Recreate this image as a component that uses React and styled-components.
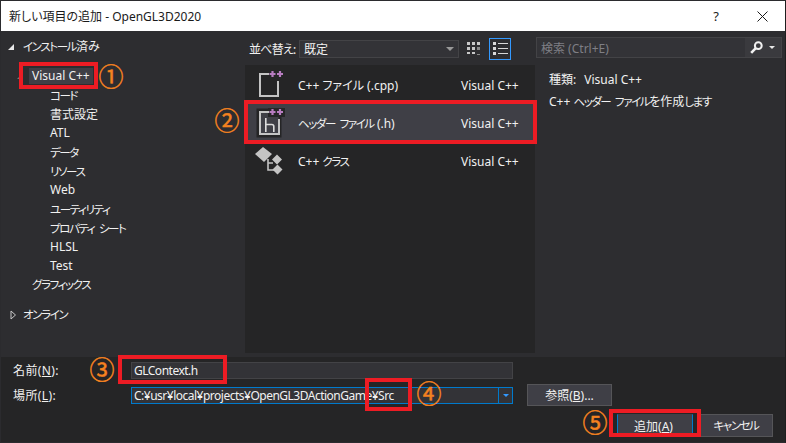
import React from 'react';
import styled, { createGlobalStyle } from 'styled-components';

const FONT = '"Noto Sans", "Noto Sans CJK JP", sans-serif';

const Global = createGlobalStyle`
  html, body { margin: 0; padding: 0; background: #1e1e1e; }
  * { box-sizing: border-box; }
`;

const Dialog = styled.div`
  position: relative;
  width: 786px;
  height: 443px;
  overflow: hidden;
  display: flex;
  flex-direction: column;
  background: #2d2d30;
  border: 1px solid #2b2b2e;
  border-right-color: #1e1e1e;
  font-family: ${FONT};
  font-size: 12px;
  font-feature-settings: "palt";
  color: #f1f1f1;
`;

// the dialog's UI font has narrow kana, so kana runs get tightened
const Kana = styled.span`
  font-size: 11.5px;
  letter-spacing: -1.4px;
  word-spacing: 3px;
`;

const TitleBar = styled.div`
  height: 30px;
  flex: none;
  display: flex;
  align-items: center;
  background: #fff;
  color: #1a1a1a;
  padding-left: 8px;
  font-size: 12px;
`;

const TitleText = styled.div`
  flex: 1;
  padding-bottom: 1px;
`;

const Help = styled.div`
  width: 46px;
  text-align: center;
  font-size: 13px;
`;

const CloseBtn = styled.div`
  width: 46px;
  display: flex;
  justify-content: center;
`;

const Main = styled.div`
  height: 326px;
  flex: none;
  display: flex;
`;

const Tree = styled.div`
  width: 243px;
  flex: none;
  padding-top: 6px;
`;

const TreeRow = styled.div`
  height: 19px;
  display: flex;
  align-items: center;
  padding-left: ${(p) => p.$indent}px;
  margin-top: ${(p) => p.$gap || 0}px;
  white-space: nowrap;
`;

const TreeLabel = styled.span`
  padding: 0 3px;
  line-height: 16px;
  background: ${(p) => (p.$selected ? '#3f3f46' : 'transparent')};
`;

const Arrow = styled.span`
  width: 0;
  height: 0;
  margin-right: 6px;
  flex: none;
  border-bottom: 6px solid ${(p) => (p.$dim ? '#777' : '#e8e8e8')};
  border-left: 6px solid transparent;
`;

const ClosedArrowBox = styled.span`
  width: 7px;
  height: 10px;
  margin-right: 3px;
  flex: none;
  display: flex;
`;

const Center = styled.div`
  width: 291px;
  flex: none;
  display: flex;
  flex-direction: column;
  padding-left: 1px;
`;

const Toolbar = styled.div`
  height: 34px;
  flex: none;
  display: flex;
  align-items: center;
  padding-left: 4px;
  padding-top: 1px;
`;

const SortLabel = styled.span`
  width: 50px;
  flex: none;
  white-space: nowrap;
  letter-spacing: -0.8px;
`;

const SortSelect = styled.div`
  width: 160px;
  height: 18px;
  display: flex;
  align-items: center;
  justify-content: space-between;
  padding: 0 4px;
  background: #333337;
  border: 1px solid #434346;
`;

const Caret = styled.span`
  width: 0;
  height: 0;
  border-top: ${(p) => p.$s || 4}px solid ${(p) => p.$color || '#999'};
  border-left: ${(p) => p.$s || 4}px solid transparent;
  border-right: ${(p) => p.$s || 4}px solid transparent;
`;

const ViewBtn = styled.div`
  width: 22px;
  height: 22px;
  margin-left: ${(p) => p.$ml}px;
  display: flex;
  align-items: center;
  justify-content: center;
  border: 1px solid ${(p) => (p.$active ? '#3399ff' : 'transparent')};
`;

const List = styled.div`
  height: 288px;
  background: #252526;
  padding-top: 1px;
`;

const Item = styled.div`
  height: 38px;
  display: flex;
  align-items: center;
  background: ${(p) => (p.$selected ? '#3f3f46' : 'transparent')};
`;

const ItemIcon = styled.div`
  width: 53px;
  flex: none;
  display: flex;
  justify-content: center;
  padding-right: 3px;
`;

const ItemName = styled.div`
  width: 163px;
  flex: none;
`;

const Details = styled.div`
  flex: 1;
  padding: 6px 5px 0 1px;
`;

const SearchBox = styled.div`
  width: 246px;
  height: 21px;
  display: flex;
  align-items: center;
  background: #333337;
  border: 1px solid #434346;
  padding-left: 4px;
  color: #7f7f85;
`;

const SearchText = styled.span`
  flex: 1;
`;

const SearchBtn = styled.div`
  width: 36px;
  height: 19px;
  display: flex;
  align-items: center;
  justify-content: space-between;
  padding: 0 6px 0 5px;
  background: #3a3a3e;
`;

const Info = styled.div`
  padding: 11px 0 0 13px;
  line-height: 22px;
`;

const InfoKey = styled.span`
  margin-right: 8px;
`;

const Footer = styled.div`
  flex: 1;
  background: #252526;
  padding: 4px 12px 0 12px;
`;

const FormRow = styled.div`
  display: flex;
  align-items: center;
  margin-top: ${(p) => p.$mt || 0}px;
`;

const FormLabel = styled.label`
  width: 118px;
  flex: none;
  letter-spacing: 0.4px;

  u { text-underline-offset: 1px; }
`;

const TextBox = styled.div`
  width: 382px;
  height: 17px;
  flex: none;
  display: flex;
  align-items: center;
  padding-left: 2px;
  background: #333337;
  border: 1px solid ${(p) => (p.$focus ? '#007acc' : '#434346')};
  white-space: nowrap;
  letter-spacing: -0.5px;
`;

const BoxText = styled.span`
  flex: 1;
`;

const DropBtn = styled.span`
  width: 14px;
  height: 15px;
  display: flex;
  align-items: center;
  justify-content: center;
  border-left: 1px solid #007acc;
`;

const Button = styled.button`
  width: ${(p) => p.$w}px;
  height: ${(p) => p.$h}px;
  margin-left: ${(p) => p.$ml || 0}px;
  flex: none;
  padding: 0;
  font: inherit;
  font-feature-settings: "palt";
  color: #f1f1f1;
  background: #3f3f46;
  border: 1px solid #555558;
  ${(p) => p.$primary && 'border-color: #3f3f46; border-left-color: #007acc; border-right-color: #007acc; padding-right: 3px;'}

  u { text-underline-offset: 1px; }
`;

const Actions = styled.div`
  display: flex;
  justify-content: flex-end;
  margin-top: 8px;
`;

// annotation layer drawn over the dialog
const RedBox = styled.div`
  position: absolute;
  left: ${(p) => p.$x - 1}px;
  top: ${(p) => p.$y - 1}px;
  width: ${(p) => p.$w}px;
  height: ${(p) => p.$h}px;
  border: 4px solid #ed1c24;
`;

const Num = styled.div`
  position: absolute;
  left: ${(p) => p.$x - 1}px;
  top: ${(p) => p.$y - 1}px;
  width: 24px;
  height: 24px;
  display: flex;
  align-items: center;
  justify-content: center;
  font-family: "Noto Sans CJK JP", sans-serif;
  font-feature-settings: normal;
  font-size: 25px;
  line-height: 24px;
  color: #f58220;
  -webkit-text-stroke: 0.5px #f58220;
`;

const treeChildren = [
  { label: 'コード', kana: true },
  { label: '書式設定' },
  { label: 'ATL' },
  { label: 'データ', kana: true },
  { label: 'リソース', kana: true },
  { label: 'Web' },
  { label: 'ユーティリティ', kana: true },
  { label: 'プロパティ シート', kana: true },
  { label: 'HLSL' },
  { label: 'Test' },
];

const Pluses = () => (
  <path d="M14.5 4h6M17.5 1v6M22 4h6M25 1v6" stroke="#b77cc0" strokeWidth="2.2" />
);

const CppFileIcon = () => (
  <svg width="30" height="30" viewBox="0 0 30 30">
    <path d="M14 4H5V26H23V11" fill="none" stroke="#c4c4c4" strokeWidth="2" />
    <Pluses />
  </svg>
);

const HeaderIcon = () => (
  <svg width="30" height="30" viewBox="0 0 30 30">
    <path d="M3 2H25V28H3z" fill="none" stroke="#252526" strokeWidth="3" />
    <path d="M13 0h17v9H13z" fill="#252526" />
    <path d="M14 4H5V26H24V11" fill="none" stroke="#c4c4c4" strokeWidth="2" />
    <path d="M10.8 10v14M10.8 16.5h6a2 2 0 0 1 2 2V24" fill="none" stroke="#dcdcdc" strokeWidth="1.6" />
    <Pluses />
  </svg>
);

const ClassIcon = () => (
  <svg width="30" height="30" viewBox="0 0 30 30">
    <path d="M8 1l9 7-8 8-9-8z" fill="#c4c4c4" />
    <path d="M22 8.5l5 5-5 5-5-5zM22.5 18.5l5 5-5 5-5-5z" fill="#c4c4c4" />
    <path d="M13 13v11h6M13 17h5" fill="none" stroke="#c4c4c4" strokeWidth="1.6" />
  </svg>
);

const GridIcon = () => (
  <svg width="14" height="14" viewBox="0 0 14 14" fill="#c8c8c8">
    <path d="M0 0h3v3H0zM5 0h3v3H5zM10 0h3v3h-3zM0 5h3v3H0zM5 5h3v3H5zM0 10h3v2H0zM5 10h3v2H5z" />
    <path d="M10 5h3v3h-3zM10 12h3v1h-3z" fill="#8a8a8a" />
  </svg>
);

const ListIcon = () => (
  <svg width="15" height="14" viewBox="0 0 15 14" fill="#d8d8d8">
    <path d="M0 0h3v3H0zM0 5h3v3H0zM0 10h3v3H0z" />
    <path d="M5 1h10v1H5zM5 6h10v1H5zM5 11h10v1H5z" />
  </svg>
);

const SearchIcon = () => (
  <svg width="13" height="13" viewBox="0 0 13 13">
    <circle cx="8.3" cy="4.7" r="3.4" fill="none" stroke="#f1f1f1" strokeWidth="2" />
    <path d="M5.8 7.2L1.2 11.8" stroke="#f1f1f1" strokeWidth="2.6" />
  </svg>
);

const CloseIcon = () => (
  <svg width="11" height="11" viewBox="0 0 11 11">
    <path d="M.5.5l10 10M10.5.5l-10 10" stroke="#1a1a1a" strokeWidth="1" />
  </svg>
);

const ClosedArrow = () => (
  <ClosedArrowBox>
    <svg width="7" height="10" viewBox="0 0 7 10">
      <path d="M1 1l4.5 4L1 9z" fill="none" stroke="#c8c8c8" />
    </svg>
  </ClosedArrowBox>
);

const App = () => {
  return (
    <Dialog>
      <Global />
      <TitleBar>
        <TitleText>新しい項目の追加 - OpenGL3D2020</TitleText>
        <Help>?</Help>
        <CloseBtn><CloseIcon /></CloseBtn>
      </TitleBar>

      <Main>
        <Tree>
          <TreeRow $indent={7}><Arrow /><TreeLabel><Kana>インストール</Kana>済み</TreeLabel></TreeRow>
          <TreeRow $indent={16} $gap={10}><Arrow $dim /><TreeLabel $selected>Visual C++</TreeLabel></TreeRow>
          {treeChildren.map((t) => (
            <TreeRow key={t.label} $indent={49}>{t.kana ? <Kana>{t.label}</Kana> : t.label}</TreeRow>
          ))}
          <TreeRow $indent={28}><TreeLabel><Kana>グラフィックス</Kana></TreeLabel></TreeRow>
          <TreeRow $indent={9} $gap={11}><ClosedArrow /><TreeLabel><Kana>オンライン</Kana></TreeLabel></TreeRow>
        </Tree>

        <Center>
          <Toolbar>
            <SortLabel>並べ替え:</SortLabel>
            <SortSelect>既定<Caret /></SortSelect>
            <ViewBtn $ml={4}><GridIcon /></ViewBtn>
            <ViewBtn $ml={4} $active><ListIcon /></ViewBtn>
          </Toolbar>
          <List>
            <Item>
              <ItemIcon><CppFileIcon /></ItemIcon>
              <ItemName>C++ ファイル (.cpp)</ItemName>
              Visual C++
            </Item>
            <Item $selected>
              <ItemIcon><HeaderIcon /></ItemIcon>
              <ItemName><Kana>ヘッダー ファイル</Kana> (.h)</ItemName>
              Visual C++
            </Item>
            <Item>
              <ItemIcon><ClassIcon /></ItemIcon>
              <ItemName>C++ <Kana>クラス</Kana></ItemName>
              Visual C++
            </Item>
          </List>
        </Center>

        <Details>
          <SearchBox>
            <SearchText>検索 (Ctrl+E)</SearchText>
            <SearchBtn><SearchIcon /><Caret $color="#e8e8e8" $s={3} /></SearchBtn>
          </SearchBox>
          <Info>
            <div><InfoKey>種類:</InfoKey>Visual C++</div>
            <div>C++ <Kana>ヘッダー ファイル</Kana>を作成<Kana>します</Kana></div>
          </Info>
        </Details>
      </Main>

      <Footer>
        <FormRow>
          <FormLabel>名前(<u>N</u>):</FormLabel>
          <TextBox>GLContext.h</TextBox>
        </FormRow>
        <FormRow $mt={5}>
          <FormLabel>場所(<u>L</u>):</FormLabel>
          <TextBox $focus>
            <BoxText>C:¥usr¥local¥projects¥OpenGL3DActionGame¥Src</BoxText>
            <DropBtn><Caret $color="#3399ff" $s={3} /></DropBtn>
          </TextBox>
          <Button $w={85} $h={22} $ml={14}>参照(<u>B</u>)...</Button>
        </FormRow>
        <Actions>
          <Button $primary $w={76} $h={23}>追加(<u>A</u>)</Button>
          <Button $w={74} $h={23} $ml={6}><Kana>キャンセル</Kana></Button>
        </Actions>
      </Footer>

      <RedBox $x={19} $y={62} $w={79} $h={27} />
      <RedBox $x={244} $y={100} $w={293} $h={44} />
      <RedBox $x={118} $y={355} $w={109} $h={29} />
      <RedBox $x={365} $y={378} $w={47} $h={33} />
      <RedBox $x={609} $y={409} $w={92} $h={28} />
      <Num $x={99} $y={63}>①</Num>
      <Num $x={215} $y={107}>②</Num>
      <Num $x={90} $y={356}>③</Num>
      <Num $x={417} $y={380}>④</Num>
      <Num $x={583} $y={409}>⑤</Num>
    </Dialog>
  );
};

export default App;
